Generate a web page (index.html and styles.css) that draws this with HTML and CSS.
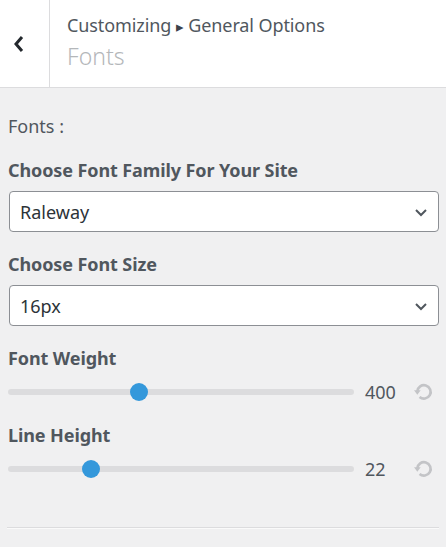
FILE: index.html
```html
<!DOCTYPE html>
<html>
<head>
<meta charset="utf-8">
<link rel="stylesheet" href="styles.css">
</head>
<body>
<div class="header">
  <div class="back">
    <svg width="12" height="18" viewBox="0 0 12 18"><path d="M9 2 L3 9 L9 16" fill="none" stroke="#23282d" stroke-width="3"/></svg>
  </div>
  <div class="titles">
    <div class="action">Customizing <span class="tri">▸</span> General Options</div>
    <div class="title">Fonts</div>
  </div>
</div>
<div class="content">
  <div class="section-label">Fonts :</div>
  <div class="control">
    <div class="control-title">Choose Font Family For Your Site</div>
    <div class="select"><span>Raleway</span>
      <svg class="caret" width="14" height="10" viewBox="0 0 14 10"><path d="M2 3 L7 8 L12 3" fill="none" stroke="#50575e" stroke-width="2"/></svg>
    </div>
  </div>
  <div class="control">
    <div class="control-title">Choose Font Size</div>
    <div class="select"><span>16px</span>
      <svg class="caret" width="14" height="10" viewBox="0 0 14 10"><path d="M2 3 L7 8 L12 3" fill="none" stroke="#50575e" stroke-width="2"/></svg>
    </div>
  </div>
  <div class="control">
    <div class="control-title">Font Weight</div>
    <div class="range-row">
      <div class="track"><div class="thumb" style="left: 38%"></div></div>
      <div class="value">400</div>
      <svg class="reset" width="20" height="20" viewBox="0 0 18 18"><path d="M3 8.5 A6 6 0 1 1 5 13.4" fill="none" stroke="#c3c4c7" stroke-width="2.4"/><path d="M0 7.5 L6 7.5 L3 11.5 Z" fill="#c3c4c7"/></svg>
    </div>
  </div>
  <div class="control">
    <div class="control-title">Line Height</div>
    <div class="range-row">
      <div class="track"><div class="thumb" style="left: 24%"></div></div>
      <div class="value">22</div>
      <svg class="reset" width="20" height="20" viewBox="0 0 18 18"><path d="M3 8.5 A6 6 0 1 1 5 13.4" fill="none" stroke="#c3c4c7" stroke-width="2.4"/><path d="M0 7.5 L6 7.5 L3 11.5 Z" fill="#c3c4c7"/></svg>
    </div>
  </div>
  <hr class="sep">
</div>
</body>
</html>
```
FILE: styles.css
```css
html, body {
  margin: 0;
  padding: 0;
}
body {
  background: #f0f0f1;
  font-family: "Noto Sans", "Open Sans", sans-serif;
  color: #50575e;
  width: 446px;
  height: 547px;
  overflow: hidden;
}
.header {
  display: flex;
  height: 87px;
  background: #fff;
  border-bottom: 1px solid #dcdcde;
}
.back {
  width: 50px;
  border-right: 1px solid #dcdcde;
  display: flex;
  align-items: center;
  padding: 0 0 0 13px;
  box-sizing: border-box;
}
.back svg {
  display: block;
}
.titles {
  padding: 13px 0 0 17px;
}
.action {
  font-size: 18px;
  line-height: 24px;
  color: #50575e;
  letter-spacing: -0.1px;
}
.tri {
  font-size: 15px;
  color: #3c434a;
}
.title {
  font-size: 23px;
  font-weight: 300;
  color: #b4b7ba;
  line-height: 32px;
  margin-top: 2px;
}
.content {
  padding: 0 7px 0 8px;
}
.section-label {
  font-size: 18px;
  line-height: 24px;
  margin-top: 26px;
  color: #50575e;
}
.control {
  margin-top: 20px;
}
.control-title {
  font-size: 18px;
  font-weight: 700;
  line-height: 24px;
  color: #50575e;
  letter-spacing: -0.1px;
}
.select {
  margin-top: 9px;
  margin-left: 1px;
  height: 41px;
  box-sizing: border-box;
  border: 1px solid #8c8f94;
  border-radius: 4px;
  background: #fff;
  display: flex;
  align-items: center;
  justify-content: space-between;
  padding: 0 10px 0 10px;
  font-size: 18px;
  color: #2c3338;
}
.caret {
  display: block;
}
.range-row {
  display: flex;
  align-items: center;
  height: 22px;
  margin-top: 11px;
}
.track {
  position: relative;
  width: 346px;
  height: 6px;
  background: #dcdcde;
  border-radius: 3px;
}
.thumb {
  position: absolute;
  top: 50%;
  width: 18px;
  height: 18px;
  margin: -9px 0 0 -9px;
  border-radius: 50%;
  background: #3498db;
}
.value {
  margin-left: 11px;
  width: 49px;
  font-size: 18px;
  color: #50575e;
}
.reset {
  margin-left: 0;
  display: block;
}
.sep {
  margin: 47px 0 0 -1px;
  border: 0;
  border-top: 1px solid #dcdcde;
  border-bottom: 1px solid #fafafa;
}
```
